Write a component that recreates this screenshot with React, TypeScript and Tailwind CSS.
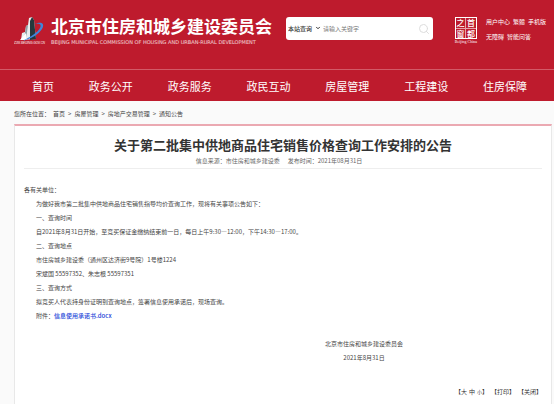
import React from "react";
import { ChevronDown, Search } from "lucide-react";

const navItems = [
  "首页",
  "政务公开",
  "政务服务",
  "政民互动",
  "房屋管理",
  "工程建设",
  "住房保障",
];

const crumbs = ["首页", "房屋管理", "房地产交易管理", "通知公告"];

const paragraphs = [
  "为做好我市第二批集中供地商品住宅销售指导均价查询工作，现将有关事项公告如下：",
  "一、查询时间",
  "自2021年8月31日开始，至竞买保证金缴纳结束前一日，每日上午9:30—12:00，下午14:30—17:00。",
  "二、查询地点",
  "市住房城乡建设委（通州区达济街9号院）1号楼1224",
  "宋斌国 55597352、朱志根 55597351",
  "三、查询方式",
  "拟竞买人代表持身份证明到查询地点，签署信息使用承诺后，现场查询。",
];

function Logo() {
  return (
    <svg viewBox="0 0 32 28" className="h-7 w-8 shrink-0" aria-hidden="true">
      <path d="M15 1 L18 0 L20 3 L22 22 L7 23 L8 16 L11 15 L12 9 L14 8 Z" fill="#e9eef0" />
      <path d="M18 0 L20 3 L22 22 L16 23 L16 4 Z" fill="#26383c" />
      <path d="M12 9 L14 8 L12 23 L10 23 Z" fill="#8fa0a5" />
      <path d="M6 23 L12 16 L13 23 Z" fill="#ffffff" />
      <path
        d="M21 7 C28 4 31 7 28 12 C25 17 17 22 8 24 C17 20 24 15 26 11 C28 7 25 6 21 7 Z"
        fill="#3f86dc"
      />
      <text
        x="0"
        y="27"
        fontSize="3"
        fontStyle="italic"
        fontFamily="Liberation Sans, sans-serif"
        fill="#ffffff"
      >
        ZJW.BEIJING.GOV.CN
      </text>
    </svg>
  );
}

function Seal() {
  return (
    <div className="flex w-6 shrink-0 flex-col items-center">
      <div className="grid size-[22px] grid-cols-2 border border-white text-center text-[8px] leading-[10px] font-medium">
        <span className="border-r border-b border-white/60">之</span>
        <span className="border-b border-white/60">首</span>
        <span className="border-r border-white/60">窗</span>
        <span>都</span>
      </div>
      <span className="font-['Liberation_Serif',serif] text-[4px] leading-[5px] whitespace-nowrap">
        Beijing China
      </span>
    </div>
  );
}

function Header() {
  return (
    <header className="bg-[#be1b2d] text-white">
      <div className="flex h-[69px] items-start pt-[17px] pr-2 pl-[14px]">
        <Logo />
        <div className="ml-[5px] shrink-0 whitespace-nowrap">
          <h1 className="text-[17px] leading-[18px] font-bold">
            北京市住房和城乡建设委员会
          </h1>
          <p className="mt-1 font-['DejaVu_Sans',sans-serif] text-[5px] leading-[6px] text-white/80">
            BEIJING MUNICIPAL COMMISSION OF HOUSING AND URBAN-RURAL DEVELOPMENT
          </p>
        </div>
        <form
          className="ml-auto flex h-[23px] w-[147px] shrink-0 items-center rounded-[3px] bg-white px-[2px] text-[#333]"
          onSubmit={(e) => e.preventDefault()}
        >
          <div className="relative">
            <select
              aria-label="查询范围"
              className="w-[33px] appearance-none text-[6px] leading-[10px] font-medium"
            >
              <option>本站查询</option>
            </select>
            <ChevronDown
              strokeWidth={4}
              className="pointer-events-none absolute top-[3px] right-0 size-[6px]"
            />
          </div>
          <input
            type="text"
            aria-label="关键字"
            placeholder="请输入关键字"
            className="min-w-0 flex-1 pl-[2px] text-[6px] leading-[10px] placeholder:text-[#777]"
          />
          <button type="submit" aria-label="搜索" className="pr-[1px] text-[#ddd]">
            <Search strokeWidth={2} className="size-3" />
          </button>
        </form>
        <div className="ml-[21px]">
          <Seal />
        </div>
        <div className="ml-2 flex shrink-0 flex-col gap-[5px] text-[6px] leading-[10px] whitespace-nowrap">
          <div className="flex gap-[3px]">
            <a href="#">用户中心</a>
            <a href="#">繁體</a>
            <a href="#">手机版</a>
          </div>
          <div className="flex gap-[3px]">
            <a href="#">无障碍</a>
            <a href="#">智能问答</a>
          </div>
        </div>
      </div>
      <nav className="flex h-8 items-center justify-between border-t border-[#d25a67] pr-[27px] pl-8 text-[11px] leading-4">
        {navItems.map((item) => (
          <a key={item} href="#">
            {item}
          </a>
        ))}
      </nav>
    </header>
  );
}

export default function App() {
  return (
    <div
      lang="zh-CN"
      className="min-h-screen bg-[#fafafa] font-['Noto_Sans_CJK_SC',sans-serif] text-[6px] leading-[14px] text-[#444]"
    >
      <Header />
      <div className="flex gap-[3px] pt-[6px] pb-[3px] pl-[14px]">
        <span>您所在位置：</span>
        {crumbs.map((crumb, i) => (
          <React.Fragment key={crumb}>
            {i > 0 && <span>&gt;</span>}
            <a href="#">{crumb}</a>
          </React.Fragment>
        ))}
      </div>

      <main className="mr-[2px] ml-[14px] border-x border-t-2 border-x-[#e8e8e8] border-t-[#eba9b2] bg-white px-[9px] pb-[5px]">
        <h2 className="pt-[10px] text-center text-[13px] leading-[18px] font-bold text-[#333]">
          关于第二批集中供地商品住宅销售价格查询工作安排的公告
        </h2>
        <p className="flex justify-center gap-2 border-b border-[#eee] pr-2 text-[#666]">
          <span>信息来源：市住房和城乡建设委</span>
          <span>发布时间：2021年08月31日</span>
        </p>

        <article className="pt-[14px]">
          <p>各有关单位：</p>
          <div className="pl-3">
            {paragraphs.map((text) => (
              <p key={text}>{text}</p>
            ))}
            <p>
              附件：
              <a href="#" className="font-medium text-[#2445d8]">
                信息使用承诺书.docx
              </a>
            </p>
          </div>
          <div className="mt-[14px] mr-[139px] ml-auto w-fit text-center">
            <p>北京市住房和城乡建设委员会</p>
            <p>2021年8月31日</p>
          </div>
        </article>

        <div className="mt-5 flex justify-end gap-[3px] text-[#333]">
          <span className="flex">
            【<button type="button">大</button>
            <button type="button" className="px-[2px]">中</button>
            <button type="button" className="text-[5px]">小</button>】
          </span>
          <button type="button">【打印】</button>
          <button type="button">【关闭】</button>
        </div>
      </main>
    </div>
  );
}
